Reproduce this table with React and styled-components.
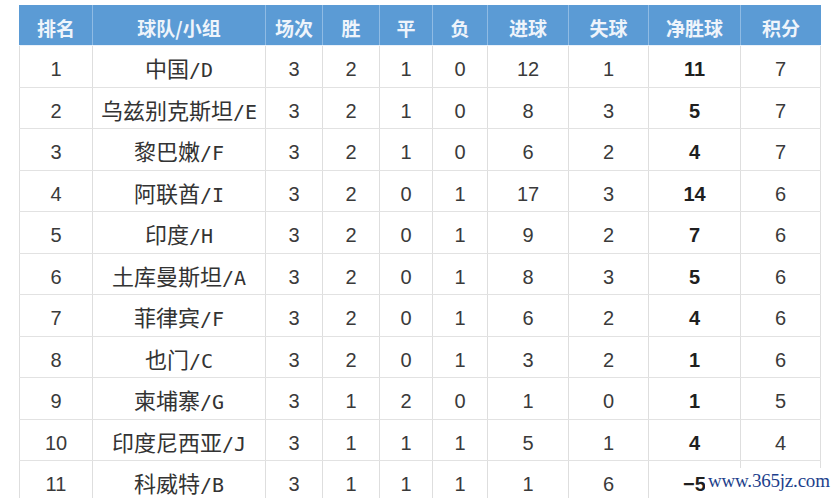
import React from "react";
import styled, { createGlobalStyle } from "styled-components";

const Global = createGlobalStyle`
  html, body { margin: 0; padding: 0; background: #fff; }
  body { width: 834px; height: 498px; overflow: hidden; }
`;

const COLS = "73px 173px 57px 57px 53px 55px 81px 80px 92px 81px";

const Page = styled.div`
  position: relative;
  width: 834px;
  height: 498px;
  overflow: hidden;
  padding: 5px 0 0 19px;
  box-sizing: border-box;
  background: #fff;
`;

const Table = styled.div`
  width: 802px;
  display: flex;
  flex-direction: column;
`;

const Row = styled.div`
  display: grid;
  grid-template-columns: ${COLS};
  height: ${(p) => (p.$head ? "41px" : "41.5px")};
  box-sizing: border-box;
  background: ${(p) => (p.$head ? "#5b9bd5" : "#fff")};
  border-bottom: 1px solid ${(p) => (p.$head ? "#e9f1fa" : "#e2e2e2")};
`;

const HeadCell = styled.div`
  display: flex;
  align-items: center;
  justify-content: center;
  padding-top: 4px;
  box-sizing: border-box;
  border-left: 1px solid ${(p) => (p.$first ? "#5b9bd5" : "#8fbbe4")};
  font-family: "Noto Sans CJK SC", "Liberation Sans", sans-serif;
  font-weight: 700;
  font-size: 19px;
  color: #eef4fb;
  white-space: nowrap;
`;

const Cell = styled.div`
  display: flex;
  align-items: center;
  justify-content: center;
  padding-top: 7px;
  box-sizing: border-box;
  border-left: 1px solid #dedede;
  border-right: ${(p) => (p.$last ? "1px solid #dedede" : "none")};
  font-family: "Liberation Sans", Arial, sans-serif;
  font-size: 20px;
  font-weight: ${(p) => (p.$bold ? 700 : 400)};
  color: ${(p) => (p.$bold ? "#1f1f1f" : "#3a3a3a")};
  white-space: nowrap;
`;

const Team = styled.span`
  display: inline-flex;
  align-items: baseline;
  line-height: 1;
  margin-top: -3px;
`;

const TeamName = styled.span`
  font-family: "Noto Sans CJK SC", sans-serif;
  font-size: 22px;
  color: #333;
`;

const Group = styled.span`
  font-family: "DejaVu Sans Mono", "Liberation Mono", monospace;
  font-size: 20px;
  color: #333;
`;

const Watermark = styled.div`
  position: absolute;
  left: 705px;
  top: 468px;
  padding: 2px 4px 6px 3px;
  background: #fff;
  font-family: "Liberation Serif", serif;
  font-size: 19px;
  color: #1d3f8c;
  letter-spacing: -0.2px;
`;

const headers = ["排名", "球队/小组", "场次", "胜", "平", "负", "进球", "失球", "净胜球", "积分"];

const rows = [
  [1, "中国", "D", 3, 2, 1, 0, 12, 1, "11", 7],
  [2, "乌兹别克斯坦", "E", 3, 2, 1, 0, 8, 3, "5", 7],
  [3, "黎巴嫩", "F", 3, 2, 1, 0, 6, 2, "4", 7],
  [4, "阿联酋", "I", 3, 2, 0, 1, 17, 3, "14", 6],
  [5, "印度", "H", 3, 2, 0, 1, 9, 2, "7", 6],
  [6, "土库曼斯坦", "A", 3, 2, 0, 1, 8, 3, "5", 6],
  [7, "菲律宾", "F", 3, 2, 0, 1, 6, 2, "4", 6],
  [8, "也门", "C", 3, 2, 0, 1, 3, 2, "1", 6],
  [9, "柬埔寨", "G", 3, 1, 2, 0, 1, 0, "1", 5],
  [10, "印度尼西亚", "J", 3, 1, 1, 1, 5, 1, "4", 4],
  [11, "科威特", "B", 3, 1, 1, 1, 1, 6, "−5", 4],
];

export default function App() {
  return (
    <>
      <Global />
      <Page>
        <Table>
          <Row $head>
            {headers.map((h, i) => (
              <HeadCell key={h} $first={i === 0}>{h}</HeadCell>
            ))}
          </Row>
          {rows.map((r) => (
            <Row key={r[0]}>
              <Cell>{r[0]}</Cell>
              <Cell>
                <Team>
                  <TeamName>{r[1]}</TeamName>
                  <Group>/{r[2]}</Group>
                </Team>
              </Cell>
              <Cell>{r[3]}</Cell>
              <Cell>{r[4]}</Cell>
              <Cell>{r[5]}</Cell>
              <Cell>{r[6]}</Cell>
              <Cell>{r[7]}</Cell>
              <Cell>{r[8]}</Cell>
              <Cell $bold>{r[9]}</Cell>
              <Cell $last>{r[10]}</Cell>
            </Row>
          ))}
        </Table>
        <Watermark>www.365jz.com</Watermark>
      </Page>
    </>
  );
}
